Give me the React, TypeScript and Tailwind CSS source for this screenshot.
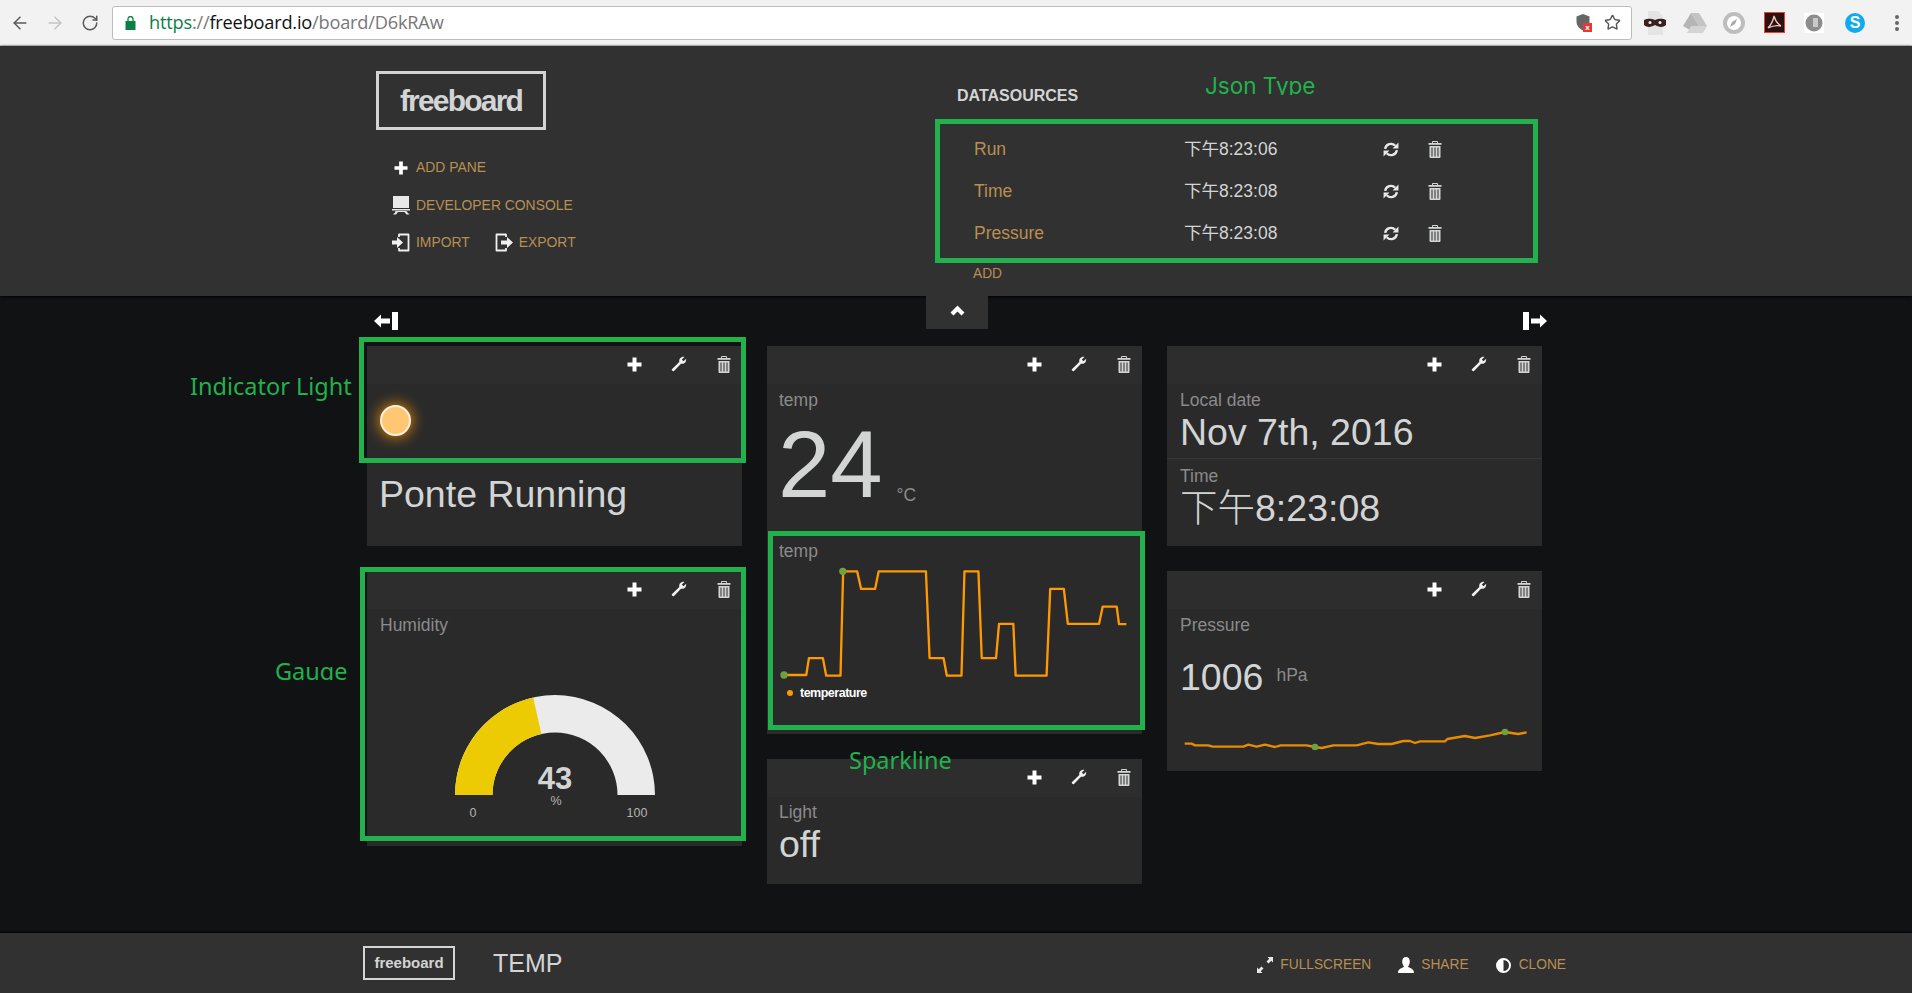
import { ArrowLeft, ArrowRight, RotateCw, Star } from "lucide-react";
import type { ReactNode } from "react";

function PlusIcon({ size = 15 }: { size?: number }) {
  return (
    <svg width={size} height={size} viewBox="0 0 15 15" fill="#fff">
      <path d="M5.500 0.500h4v5h5v4h-5v5h-4v-5h-5v-4h5z" />
    </svg>
  );
}

function TrashIcon() {
  return (
    <svg width="14" height="17" viewBox="0 0 14 17">
      <path d="M4.500 2V0.500h5V2" fill="none" stroke="#d3d4d4" strokeWidth="1" />
      <rect x="0.500" y="2" width="13" height="1.800" fill="#d3d4d4" />
      <path d="M1.500 5h11v11a1 1 0 0 1-1 1h-9a1 1 0 0 1-1-1z" fill="#d3d4d4" />
      <path d="M4 6.500v9M7 6.500v9M10 6.500v9" stroke="#2d2d2d" strokeWidth="1" />
    </svg>
  );
}

function WrenchIcon() {
  return (
    <svg width="16" height="16" viewBox="0 0 16 16" fill="#f0f0f0">
      <path d="M0.800 13.300L8.300 6C7.800 3.300 9.500 0.800 12.800 0.800L13.400 1L10.800 3.600L12.500 5.300L15.100 2.700C15.500 6 13.200 8.300 10 7.700L2.800 15.200C2 15.800 0.300 14.200 0.800 13.300z" />
    </svg>
  );
}

function RefreshIcon() {
  return (
    <svg width="16" height="17" viewBox="0 0 15 16">
      <g fill="none" stroke="#e8e8e8" strokeWidth="2.200">
        <path d="M2 7.500A5.500 5.500 0 0 1 11.500 4.500" />
        <path d="M13 8.500A5.500 5.500 0 0 1 3.500 11.500" />
      </g>
      <path d="M14.500 1.500V7H9z" fill="#e8e8e8" />
      <path d="M0.500 14.500V9H6z" fill="#e8e8e8" />
    </svg>
  );
}

function LeftBar() {
  return (
    <svg width="24" height="18" viewBox="0 0 24 18" fill="#fff">
      <rect x="18" y="0" width="6" height="18" />
      <path d="M0 9l7-6.500v4h9v5H7v4z" />
    </svg>
  );
}

function RightBar() {
  return (
    <svg width="24" height="18" viewBox="0 0 24 18" fill="#fff">
      <rect x="0" y="0" width="6" height="18" />
      <path d="M24 9l-7-6.500v4H8v5h9v4z" />
    </svg>
  );
}

function ConsoleIcon() {
  return (
    <svg width="18" height="19" viewBox="0 0 18 19" fill="#e8e8e8">
      <rect x="1" y="0" width="16" height="12" />
      <path d="M0 13h18v1.500H0zM3.500 15h11l1 1.500 2 2h-3l-2-2.500H6L4 18.500H1l2-2z" />
    </svg>
  );
}

function ImportIcon() {
  return (
    <svg width="18" height="19" viewBox="0 0 18 19" fill="none">
      <path d="M7 4V1.500h9.500v16H7V15" stroke="#f0f0f0" strokeWidth="1.800" strokeLinejoin="round" />
      <path d="M0 7.500h5V4l6 5.500-6 5.500v-3.500H0z" fill="#f0f0f0" />
    </svg>
  );
}

function ExportIcon() {
  return (
    <svg width="18" height="19" viewBox="0 0 18 19" fill="none">
      <path d="M11 4V1.500H1.500v16H11V15" stroke="#f0f0f0" strokeWidth="1.800" strokeLinejoin="round" />
      <path d="M6 7.500h6V4l6 5.500-6 5.500v-3.500H6z" fill="#f0f0f0" />
    </svg>
  );
}

function HeaderLink({ icon, label }: { icon: ReactNode; label: string }) {
  return (
    <div className="flex items-center gap-[6px]">
      <span className="flex w-[18px] justify-center">{icon}</span>
      <span className="text-[13.900px] leading-none text-[#b88f51]">{label}</span>
    </div>
  );
}

function DataSourceRow({ name, time }: { name: string; time: string }) {
  return (
    <div className="flex h-[42px] items-center">
      <span className="w-[210px] text-[17.500px] text-[#b88f51]">{name}</span>
      <span className="w-[199px] text-[17.500px] text-[#d3d4d4]">{time}</span>
      <RefreshIcon />
      <span className="ml-[29px] flex">
        <TrashIcon />
      </span>
    </div>
  );
}

function PaneHeader() {
  return (
    <div className="flex h-[38px] items-center justify-end bg-[#2d2d2d] pr-[11px] pb-[2px]">
      <PlusIcon />
      <span className="ml-[29px] flex">
        <WrenchIcon />
      </span>
      <span className="ml-[30px] flex">
        <TrashIcon />
      </span>
    </div>
  );
}

function Pane({ height, children }: { height: number; children: ReactNode }) {
  return (
    <div className="flex flex-col bg-[#2a2a2a]" style={{ height }}>
      <PaneHeader />
      {children}
    </div>
  );
}

function Title({ children }: { children: ReactNode }) {
  return (
    <div className="h-[22px] text-[17.500px] leading-[22px] text-[#8b8b8b]">{children}</div>
  );
}

function Gauge() {
  const r1 = 100;
  const r2 = 62.500;
  const a = Math.PI * 0.43;
  const cx = 188;
  const cy = 190;
  const ox = cx - r1 * Math.cos(a);
  const oy = cy - r1 * Math.sin(a);
  const ix = cx - r2 * Math.cos(a);
  const iy = cy - r2 * Math.sin(a);
  return (
    <svg width="375" height="230" viewBox="0 0 375 230">
      <path
        d={`M${cx - r1} ${cy}A${r1} ${r1} 0 0 1 ${cx + r1} ${cy}H${cx + r2}A${r2} ${r2} 0 0 0 ${cx - r2} ${cy}Z`}
        fill="#ebebeb"
      />
      <path
        d={`M${cx - r1} ${cy}A${r1} ${r1} 0 0 1 ${ox} ${oy}L${ix} ${iy}A${r2} ${r2} 0 0 0 ${cx - r2} ${cy}Z`}
        fill="#edcb04"
      />
      <text x={cx} y={cy - 6} textAnchor="middle" fontSize="31" fontWeight="700" fill="#d3d4d4">
        43
      </text>
      <text x={cx + 1} y={cy + 10} textAnchor="middle" fontSize="12.500" fill="#b3b3b3">
        %
      </text>
      <text x={106} y={cy + 22} textAnchor="middle" fontSize="12.500" fill="#b3b3b3">
        0
      </text>
      <text x={270} y={cy + 22} textAnchor="middle" fontSize="12.500" fill="#b3b3b3">
        100
      </text>
    </svg>
  );
}

const tempPoints =
  "70,1008 137,1008 145,957 187,957 197,1010 240,1010 248,696 290,696 302,749 344,749 355,696 497,696 508,957 550,957 560,1010 604,1010 613,696 655,696 665,957 708,957 717,854 760,854 767,1010 860,1010 871,749 912,749 924,854 1018,854 1029,802 1071,802 1078,855 1100,855";

const pressurePoints =
  "104,1207 125,1207 135,1212 175,1212 188,1216 280,1216 295,1210 320,1216 345,1210 375,1217 392,1212 470,1212 495,1217 515,1220 550,1212 620,1212 655,1203 685,1208 725,1208 760,1199 780,1199 795,1205 810,1200 885,1200 892,1193 945,1184 975,1190 1020,1182 1065,1172 1105,1178 1130,1173";

function Annotation({ className, children }: { className: string; children: string }) {
  return (
    <div className={`absolute overflow-hidden whitespace-nowrap text-[#22b14c] ${className}`}>
      {children}
    </div>
  );
}

function ExtensionIcons() {
  return (
    <div className="flex items-center">
      <svg width="28" height="28" viewBox="0 0 28 28" className="ml-[9px]">
        <path d="M7 2h10l5 5v19H7z" fill="#e4e4e4" />
        <path d="M3 11c4-2 8-1 11 0 3-1 7-2 11 0v5c-3 3-8 2-11 0-3 2-8 3-11 0z" fill="#3b2020" />
        <circle cx="9" cy="13.500" r="1.500" fill="#eee" />
        <circle cx="19" cy="13.500" r="1.500" fill="#eee" />
      </svg>
      <svg width="24" height="22" viewBox="0 0 24 22" className="ml-[14px]">
        <path d="M8 1h8l8 13h-8z" fill="#c4c4c4" />
        <path d="M8 1l8 13-4 7L0 14z" fill="#b5b5b5" />
        <path d="M4 21l4-7h16l-4 7z" fill="#d4d4d4" />
      </svg>
      <svg width="22" height="22" viewBox="0 0 22 22" className="ml-[16px]">
        <circle cx="11" cy="11" r="9" fill="#fff" stroke="#bdbdbd" strokeWidth="4" />
        <path d="M7 15l2-5 5-3-2 5z" fill="#a8a8a8" />
      </svg>
      <div className="relative ml-[19px] flex h-[21px] w-[21px] items-center justify-center border border-[#e8442e] bg-[#2a1212]">
        <svg width="15" height="15" viewBox="0 0 15 15" fill="none" stroke="#f2c8c0" strokeWidth="1.300">
          <path d="M7 1c-1 5-3 9-6 12 4-2 9-3 13-2-3-2-6-6-7-10z" />
        </svg>
      </div>
      <div className="ml-[19px] flex h-[20px] w-[20px] items-center justify-center bg-white">
        <svg width="18" height="18" viewBox="0 0 18 18">
          <circle cx="9" cy="9" r="8.500" fill="#8c8c8c" />
          <rect x="8" y="4" width="5" height="9" fill="#c9c9c9" />
        </svg>
      </div>
      <div className="ml-[21px] flex h-[20px] w-[20px] items-center justify-center rounded-full bg-[#11aaf0] text-[16px] leading-none font-bold text-white">
        S
      </div>
      <svg width="4" height="18" viewBox="0 0 4 18" fill="#666" className="ml-[30px]">
        <circle cx="2" cy="3" r="2" />
        <circle cx="2" cy="9" r="2" />
        <circle cx="2" cy="15" r="2" />
      </svg>
    </div>
  );
}

export default function App() {
  return (
    <div className="relative flex h-[993px] w-full flex-col overflow-hidden bg-[#101214] font-['Liberation_Sans','Noto_Sans_CJK_SC',sans-serif]">
      {/* browser chrome */}
      <div className="flex h-[46px] shrink-0 items-center border-b border-[#c8c8c8] bg-[#f2f2f2]">
        <ArrowLeft className="ml-[10px] h-[20px] w-[20px] text-[#5a5a5a]" strokeWidth={1.800} />
        <ArrowRight className="ml-[15px] h-[20px] w-[20px] text-[#c4c4c4]" strokeWidth={1.800} />
        <RotateCw className="ml-[16px] h-[18px] w-[18px] text-[#5a5a5a]" strokeWidth={2} />
        <div className="ml-[13px] flex h-[34px] w-[1520px] items-center rounded-[3px] border border-[#bcbcbc] bg-white pl-[12px]">
          <svg width="11" height="14" viewBox="0 0 11 14" fill="#0b8043">
            <rect x="0.500" y="5" width="10" height="9" />
            <path d="M3 5V3a2.500 2.500 0 0 1 5 0v2" fill="none" stroke="#0b8043" strokeWidth="1.300" />
          </svg>
          <span className="ml-[13px] font-['Open_Sans',sans-serif] text-[18.200px] tracking-[-0.200px]">
            <span className="text-[#0b8043]">https</span>
            <span className="text-[#777]">://</span>
            <span className="text-[#111]">freeboard.io</span>
            <span className="text-[#777]">/board/D6kRAw</span>
          </span>
          <div className="ml-auto flex items-center pr-[10px]">
            <div className="relative mr-[14px] h-[17px] w-[14px]">
              <svg width="14" height="17" viewBox="0 0 14 17" fill="#666">
                <path d="M7 0l6.500 2.500v5c0 4-3 7.500-6.500 9-3.500-1.500-6.500-5-6.500-9v-5z" />
              </svg>
              <div className="absolute top-[9px] left-[7px] flex h-[9px] w-[9px] items-center justify-center bg-[#e53935] text-[8px] leading-none font-bold text-white">
                x
              </div>
            </div>
            <Star className="h-[17px] w-[17px] text-[#555]" strokeWidth={2} />
          </div>
        </div>
        <ExtensionIcons />
      </div>

      {/* header */}
      <div className="flex h-[250px] shrink-0 bg-[#313131] pl-[376px] shadow-[0_1px_3px_#000]">
        <div className="w-[581px] pt-[25px]">
          <div className="flex h-[59px] w-[170px] items-center justify-center border-[3.500px] border-[#d3d4d4] text-[30px] font-bold tracking-[-1.800px] text-[#d3d4d4]">
            freeboard
          </div>
          <div className="mt-[31px] flex flex-col pl-[16px]">
            <HeaderLink icon={<PlusIcon size={14} />} label="ADD PANE" />
            <div className="mt-[21px]">
              <HeaderLink icon={<ConsoleIcon />} label="DEVELOPER CONSOLE" />
            </div>
            <div className="mt-[18px] flex gap-[25px]">
              <HeaderLink icon={<ImportIcon />} label="IMPORT" />
              <HeaderLink icon={<ExportIcon />} label="EXPORT" />
            </div>
          </div>
        </div>
        <div className="pt-[40px]">
          <div className="text-[16px] leading-[20px] font-bold text-[#d3d4d4]">DATASOURCES</div>
          <div className="mt-[22px] pl-[17px]">
            <DataSourceRow name="Run" time="下午8:23:06" />
            <DataSourceRow name="Time" time="下午8:23:08" />
            <DataSourceRow name="Pressure" time="下午8:23:08" />
          </div>
          <div className="mt-[12px] pl-[16px] text-[13.750px] leading-[16px] text-[#b88f51]">ADD</div>
        </div>
      </div>

      {/* arrows row */}
      <div className="flex h-[50px] shrink-0 items-start pl-[374px]">
        <div className="mt-[16px] flex">
          <LeftBar />
        </div>
        <div className="ml-[528px] flex h-[33px] w-[62px] items-start justify-center bg-[#313131] pt-[9px]">
          <svg width="15" height="11" viewBox="0 0 15 11" fill="#fff">
            <path d="M7.500 0.500L14.500 7.500 11.500 10.500 7.500 6.500 3.500 10.500 0.500 7.500z" />
          </svg>
        </div>
        <div className="mt-[16px] ml-[535px] flex">
          <RightBar />
        </div>
      </div>

      {/* panes */}
      <div className="flex flex-1 gap-[25px] pl-[367px]">
        <div className="flex w-[375px] flex-col gap-[25px]">
          <Pane height={200}>
            <div className="px-[13px] pt-[21px]">
              <div className="h-[31px] w-[31px] rounded-full border-2 border-[#fdf1df] bg-[#ffc773] shadow-[0_0_15px_#ff9900]" />
              <div className="mt-[36px] -ml-[1px] text-[37.500px] leading-[44px] text-[#d3d4d4]">Ponte Running</div>
            </div>
          </Pane>
          <Pane height={275}>
            <div className="px-[13px] pt-[5px]">
              <Title>Humidity</Title>
            </div>
            <div className="mt-[-31px]">
              <Gauge />
            </div>
          </Pane>
        </div>

        <div className="flex w-[375px] flex-col gap-[25px]">
          <Pane height={388}>
            <div className="h-[147px] px-[12px] pt-[5px]">
              <Title>temp</Title>
              <div className="mt-[2px] -ml-[1px] flex items-baseline">
                <span className="text-[94px] leading-[104px] text-[#d3d4d4]">24</span>
                <span className="relative top-[4px] ml-[14px] text-[17.500px] text-[#8b8b8b]">°C</span>
              </div>
            </div>
            <div className="px-[12px] pt-[9px]">
              <Title>temp</Title>
              <svg width="353" height="113" viewBox="50 680 1060 340" className="mt-[4px] ml-[-2px]">
                <polyline points={tempPoints} fill="none" stroke="#ff9900" strokeWidth="7" strokeLinejoin="round" />
                <circle cx="70" cy="1008" r="11" fill="#6fa23f" />
                <circle cx="247" cy="696" r="11" fill="#6fa23f" />
              </svg>
              <div className="mt-[7px] flex items-center pl-[8px]">
                <span className="h-[6px] w-[6px] rounded-full bg-[#ff9900]" />
                <span className="ml-[7px] text-[12.500px] leading-[14px] font-bold tracking-[-0.500px] text-white">
                  temperature
                </span>
              </div>
            </div>
          </Pane>
          <Pane height={125}>
            <div className="px-[12px] pt-[4px]">
              <Title>Light</Title>
              <div className="-mt-[1px] text-[37.500px] leading-[44px] text-[#d3d4d4]">off</div>
            </div>
          </Pane>
        </div>

        <div className="flex w-[375px] flex-col gap-[25px]">
          <Pane height={200}>
            <div className="h-[75px] border-b border-[#363636] px-[13px] pt-[5px]">
              <Title>Local date</Title>
              <div className="-mt-[1px] text-[37.500px] leading-[44px] text-[#d3d4d4]">Nov 7th, 2016</div>
            </div>
            <div className="px-[13px] pt-[6px]">
              <Title>Time</Title>
              <div className="-mt-[1px] text-[37.500px] leading-[44px] text-[#d3d4d4]">
                <span className="font-extralight">下午</span>8:23:08
              </div>
            </div>
          </Pane>
          <Pane height={200}>
            <div className="px-[13px] pt-[5px]">
              <Title>Pressure</Title>
              <div className="mt-[19px] flex items-start">
                <span className="text-[37.500px] leading-[44px] text-[#d3d4d4]">1006</span>
                <span className="mt-[7px] ml-[13px] text-[17.500px] text-[#8b8b8b]">hPa</span>
              </div>
              <svg width="353" height="25" viewBox="90 1160 1059 75" className="mt-[29px]">
                <polyline points={pressurePoints} fill="none" stroke="#e88c00" strokeWidth="7" strokeLinejoin="round" />
                <circle cx="495" cy="1217" r="10" fill="#6fa23f" />
                <circle cx="1065" cy="1172" r="10" fill="#6fa23f" />
              </svg>
            </div>
          </Pane>
        </div>
      </div>

      {/* footer */}
      <div className="flex h-[60px] shrink-0 items-center bg-[#313131] pl-[363px] shadow-[0_-1px_2px_#000]">
        <div className="flex h-[34px] w-[92px] items-center justify-center border-[2.500px] border-[#d3d4d4] text-[15px] font-bold text-[#d3d4d4]">
          freeboard
        </div>
        <div className="mt-[2px] ml-[38px] text-[25px] text-[#d3d4d4]">TEMP</div>
        <div className="mt-[4px] mr-[346px] ml-auto flex items-center text-[13.750px] text-[#b88f51]">
          <svg width="16" height="16" viewBox="0 0 16 16" fill="#e8e8e8">
            <path d="M10.500 0h5.500v5.500l-1.700-1.700-2.800 2.800-2-2 2.800-2.800zM5.500 16H0v-5.500l1.700 1.700 2.800-2.800 2 2-2.800 2.800z" />
          </svg>
          <span className="ml-[7px]">FULLSCREEN</span>
          <svg width="16" height="16" viewBox="0 0 16 16" fill="#fff" className="ml-[27px]">
            <path d="M8 0c2.500 0 3.800 2 3.800 4.500S10.500 9 10 10c2 1 6 1.500 6 6H0c0-4.500 4-5 6-6-.5-1-1.800-3-1.800-5.500S5.500 0 8 0z" />
          </svg>
          <span className="ml-[7px]">SHARE</span>
          <svg width="15" height="15" viewBox="0 0 15 15" className="ml-[27px]">
            <circle cx="7.500" cy="7.500" r="6.500" fill="#313131" stroke="#fff" strokeWidth="2" />
            <path d="M7.500 1a6.500 6.500 0 0 0 0 13z" fill="#fff" />
          </svg>
          <span className="ml-[8px]">CLONE</span>
        </div>
      </div>

      {/* green annotations laid over the screenshot */}
      <div className="absolute top-[119px] left-[935px] h-[144px] w-[603px] border-[5px] border-[#22b14c]" />
      <div className="absolute top-[337px] left-[359px] h-[126px] w-[387px] border-[5px] border-[#22b14c]" />
      <div className="absolute top-[567px] left-[360px] h-[274px] w-[386px] border-[5px] border-[#22b14c]" />
      <div className="absolute top-[531px] left-[768px] h-[199px] w-[377px] border-[5px] border-[#22b14c]" />
      <Annotation className="top-[70px] left-[1205px] h-[25px] font-['Inter',sans-serif] text-[22.500px] leading-[32px]">
        Json Type
      </Annotation>
      <Annotation className="top-[370px] left-[190px] font-['Noto_Sans',sans-serif] text-[23.500px] leading-[32px]">
        Indicator Light
      </Annotation>
      <Annotation className="top-[655px] left-[275px] h-[25px] font-['Noto_Sans',sans-serif] text-[23.500px] leading-[32px]">
        Gauge
      </Annotation>
      <Annotation className="top-[744px] left-[849px] font-['Noto_Sans',sans-serif] text-[23.500px] leading-[32px]">
        Sparkline
      </Annotation>
    </div>
  );
}
